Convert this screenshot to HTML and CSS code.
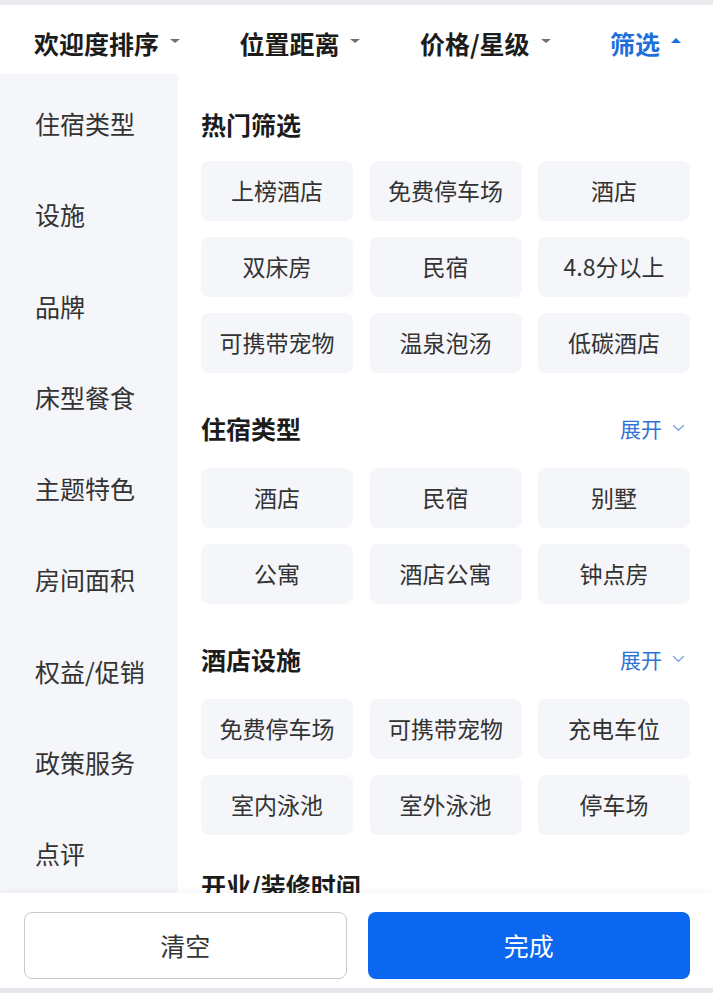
FILE: index.html
```html
<!DOCTYPE html>
<html lang="zh-CN">
<head>
<meta charset="utf-8">
<title>筛选</title>
<link rel="stylesheet" href="styles.css">
</head>
<body>
<div class="page">
  <div class="strip"></div>
  <header class="tabs">
    <div class="tab">欢迎度排序<span class="caret down"></span></div>
    <div class="tab">位置距离<span class="caret down"></span></div>
    <div class="tab">价格/星级<span class="caret down"></span></div>
    <div class="tab active">筛选<span class="caret up"></span></div>
  </header>
  <main class="body">
    <nav class="side">
      <div class="side-item">住宿类型</div>
      <div class="side-item">设施</div>
      <div class="side-item">品牌</div>
      <div class="side-item">床型餐食</div>
      <div class="side-item">主题特色</div>
      <div class="side-item">房间面积</div>
      <div class="side-item">权益/促销</div>
      <div class="side-item">政策服务</div>
      <div class="side-item">点评</div>
    </nav>
    <div class="content">
      <section class="section first">
        <div class="section-head"><h3>热门筛选</h3></div>
        <div class="chips">
          <div class="chip">上榜酒店</div>
          <div class="chip">免费停车场</div>
          <div class="chip">酒店</div>
          <div class="chip">双床房</div>
          <div class="chip">民宿</div>
          <div class="chip">4.8分以上</div>
          <div class="chip">可携带宠物</div>
          <div class="chip">温泉泡汤</div>
          <div class="chip">低碳酒店</div>
        </div>
      </section>
      <section class="section">
        <div class="section-head"><h3>住宿类型</h3><span class="more">展开<svg class="chev" viewBox="0 0 13 8" width="13" height="8"><path d="M1.5 1.5 L6.5 6.2 L11.5 1.5" fill="none" stroke="currentColor" stroke-width="1.4" stroke-linecap="round" stroke-linejoin="round"/></svg></span></div>
        <div class="chips">
          <div class="chip">酒店</div>
          <div class="chip">民宿</div>
          <div class="chip">别墅</div>
          <div class="chip">公寓</div>
          <div class="chip">酒店公寓</div>
          <div class="chip">钟点房</div>
        </div>
      </section>
      <section class="section">
        <div class="section-head"><h3>酒店设施</h3><span class="more">展开<svg class="chev" viewBox="0 0 13 8" width="13" height="8"><path d="M1.5 1.5 L6.5 6.2 L11.5 1.5" fill="none" stroke="currentColor" stroke-width="1.4" stroke-linecap="round" stroke-linejoin="round"/></svg></span></div>
        <div class="chips">
          <div class="chip">免费停车场</div>
          <div class="chip">可携带宠物</div>
          <div class="chip">充电车位</div>
          <div class="chip">室内泳池</div>
          <div class="chip">室外泳池</div>
          <div class="chip">停车场</div>
        </div>
      </section>
      <section class="section tail">
        <div class="section-head"><h3>开业/装修时间</h3></div>
      </section>
    </div>
  </main>
  <footer class="footer">
    <button class="btn btn-clear">清空</button>
    <button class="btn btn-done">完成</button>
  </footer>
  <div class="strip bottom"></div>
</div>
</body>
</html>
```

FILE: styles.css
```css
* { box-sizing: border-box; }
html, body { margin: 0; padding: 0; background: #fff; }
body {
  font-family: "Noto Sans CJK SC", "Noto Sans", "Liberation Sans", sans-serif;
  color: #333;
}
.page {
  width: 713px;
  height: 993px;
  display: flex;
  flex-direction: column;
  overflow: hidden;
}
.strip { height: 5px; background: #e9ebef; flex: none; }
.strip.bottom { background: #e6e8ec; }

.tabs {
  flex: none;
  height: 69px;
  padding: 6px 32px 0 34px;
  display: flex;
  align-items: center;
  justify-content: space-between;
  background: #fff;
}
.tab {
  font-size: 25px;
  font-weight: 700;
  line-height: 36px;
  color: #1c1c1c;
  display: flex;
  align-items: center;
}
.tab.active { color: #1e6fdc; }
.caret {
  width: 0; height: 0;
  margin-left: 11px;
  border-left: 5px solid transparent;
  border-right: 5px solid transparent;
}
.caret.down { border-top: 4px solid #707070; margin-top: -3px; }
.caret.up { border-bottom: 5px solid #1e6fdc; margin-top: -5px; }

.body {
  flex: none;
  height: 819px;
  display: flex;
  overflow: hidden;
}
.side {
  flex: none;
  width: 178px;
  background: #f5f6fa;
  padding-top: 5.5px;
}
.side-item {
  height: 91.25px;
  display: flex;
  align-items: center;
  padding: 0 0 4px 35px;
  font-size: 25px;
  color: #333;
}
.content {
  flex: 1;
  padding: 34px 23px 0 23px;
  overflow: hidden;
}
.section { margin-top: 39px; }
.section.first { margin-top: 0; }
.section.tail { margin-top: 34px; }
.section-head {
  height: 36px;
  display: flex;
  align-items: center;
  justify-content: space-between;
  margin-bottom: 20px;
}
.section.first .section-head { margin-bottom: 17px; }
.section-head h3 {
  margin: 0;
  padding-bottom: 4px;
  font-size: 25px;
  font-weight: 700;
  line-height: 36px;
  color: #1c1c1c;
}
.more {
  display: flex;
  align-items: center;
  font-size: 21px;
  color: #2f74d4;
  padding: 0 5px 4px 0;
}
.chev { margin-left: 10px; color: #7fa6dc; }
.chips {
  display: grid;
  grid-template-columns: repeat(3, 1fr);
  column-gap: 16.5px;
  row-gap: 16px;
}
.chip {
  height: 60px;
  border-radius: 8px;
  background: #f5f6fa;
  display: flex;
  align-items: center;
  justify-content: center;
  padding-bottom: 2px;
  font-size: 23px;
  color: #333;
}

.footer {
  flex: none;
  height: 95px;
  background: #fff;
  padding: 19px 23px 0 24px;
  display: grid;
  grid-template-columns: 1fr 1fr;
  column-gap: 21px;
  box-shadow: 0 -2px 6px rgba(0,0,0,0.04);
  position: relative;
}
.btn {
  height: 67px;
  border-radius: 8px;
  font-family: inherit;
  font-size: 25px;
  padding-bottom: 3px;
}
.btn-clear {
  background: #fff;
  border: 1px solid #c9cacc;
  color: #333;
}
.btn-done {
  background: #0b66f0;
  border: none;
  color: #fff;
}
```
